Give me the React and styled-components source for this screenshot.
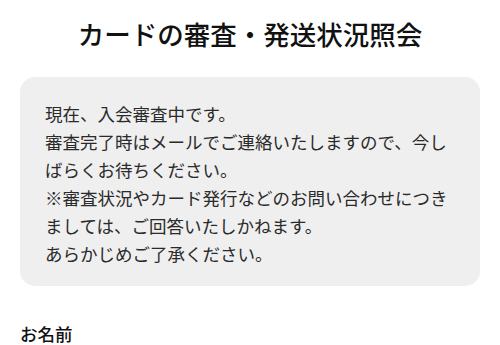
import React from 'react'
import styled, { createGlobalStyle } from 'styled-components'

const GlobalStyle = createGlobalStyle`
  html, body {
    margin: 0;
    padding: 0;
    background: #fff;
  }
  body {
    font-family: "Noto Sans CJK JP", "Noto Sans", sans-serif;
    color: #222;
  }
`

const Page = styled.div`
  width: 500px;
  padding: 14px 20px 0;
  box-sizing: border-box;
  overflow: hidden;
`

const Title = styled.h1`
  margin: 0;
  text-align: center;
  font-size: 26.5px;
  line-height: 40px;
  font-weight: 500;
  color: #111;
  letter-spacing: 0;
`

const Notice = styled.div`
  margin-top: 23px;
  background-color: #efefef;
  border-radius: 15px;
  padding: 23px 20px 19px 25px;
`

const NoticeText = styled.p`
  margin: 0;
  font-size: 17.5px;
  line-height: 27.9px;
  color: #2a2a2a;
`

const FieldLabel = styled.div`
  margin-top: 35px;
  font-size: 17.5px;
  line-height: 26px;
  font-weight: 500;
  color: #111;
`

const App = () => {
  return (
    <>
      <GlobalStyle />
      <Page>
        <Title>カードの審査・発送状況照会</Title>
        <Notice>
          <NoticeText>
            現在、入会審査中です。
            <br />
            審査完了時はメールでご連絡いたしますので、今しばらくお待ちください。
            <br />
            ※審査状況やカード発行などのお問い合わせにつきましては、ご回答いたしかねます。
            <br />
            あらかじめご了承ください。
          </NoticeText>
        </Notice>
        <FieldLabel>お名前</FieldLabel>
      </Page>
    </>
  )
}

export default App
